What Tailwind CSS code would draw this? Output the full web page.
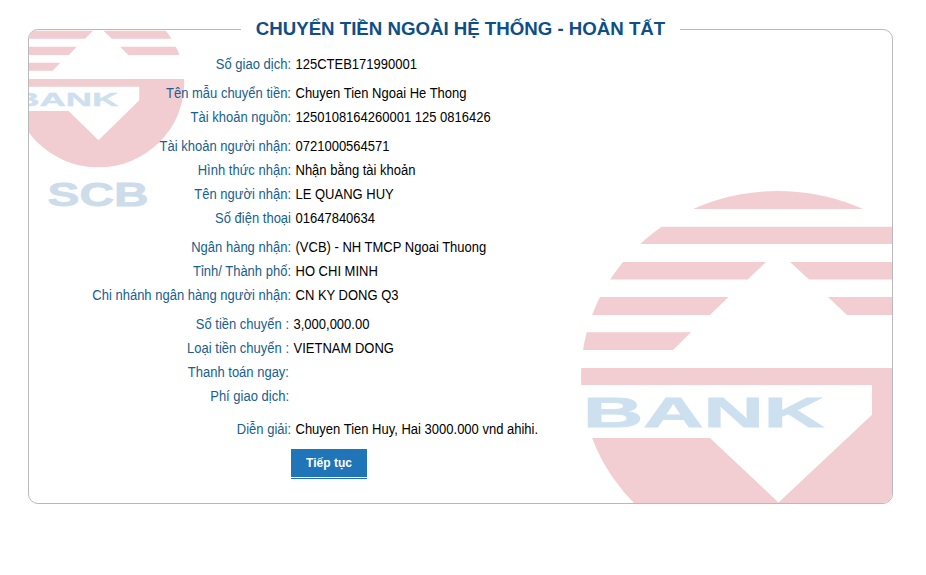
<!DOCTYPE html>
<html lang="vi">
<head>
<meta charset="utf-8">
<title>Chuyển tiền ngoài hệ thống</title>
<script src="https://cdn.jsdelivr.net/npm/@tailwindcss/browser@4"></script>
</head>
<body class="bg-white overflow-hidden font-['Liberation_Sans',Arial,sans-serif]">
<main class="pt-[29px] pl-[28px]">
  <section class="relative w-[865px] h-[475px] rounded-[10px] border border-[#b9b9bd]">
    <div class="absolute inset-0 rounded-[9px] overflow-hidden">
      <svg class="block" width="863" height="473" viewBox="29 30 863 473" font-family="Liberation Sans, Arial, sans-serif" font-weight="bold">
        <defs>
          <clipPath id="disc"><ellipse cx="778" cy="376.5" rx="197" ry="185.5"/></clipPath>
          <g id="mark">
            <g clip-path="url(#disc)">
              <path d="M570 190H990V209H570ZM570 226.7H990V244H570ZM570 262H766L747.5 279.6H570ZM790 262H990V279.6H809ZM570 297H728.5L710 315H570ZM828 297H990V315H847ZM570 332.3H691L673 350H570ZM570 368H990V570H570Z"/>
            </g>
            <path fill="#fff" d="M570 385H872V414.7L778.5 502.5L710 438H570Z"/>
            <text x="583" y="427" font-size="42" textLength="241" lengthAdjust="spacingAndGlyphs" fill="#cde0ef" stroke="#cde0ef" stroke-width=".8">BANK</text>
          </g>
        </defs>
        <use href="#mark" fill="#f2ced2"/>
        <use href="#mark" fill="#f1ccd0" transform="translate(-240.9 -88.4) scale(.436 .455)"/>
        <text x="47.5" y="206.3" font-size="33.5" textLength="101" lengthAdjust="spacingAndGlyphs" fill="#cddcea" stroke="#cddcea" stroke-width=".8">SCB</text>
      </svg>
    </div>
    <h1 class="absolute left-[212px] -top-[15px] w-[439px] h-[28px] bg-white text-center text-[18.67px] leading-[28px] font-bold text-[#0d4f86] whitespace-nowrap">CHUYỂN TIỀN NGOÀI HỆ THỐNG - HOÀN TẤT</h1>
    <div class="relative pt-[22px] flex flex-col gap-[5px] text-[13px] leading-[24px] text-black whitespace-nowrap [&_dt]:text-right [&_dt]:text-[#17608f] [&_dt]:scale-y-[1.1] [&_dd]:scale-y-[1.1] [&_dt]:translate-y-[0.5px] [&_dd]:translate-y-[0.5px]">
      <dl class="grid grid-cols-[262px_1fr] gap-x-[4.5px]">
        <dt>Số giao dịch:</dt><dd>125CTEB171990001</dd>
      </dl>
      <dl class="grid grid-cols-[262px_1fr] gap-x-[4.5px]">
        <dt>Tên mẫu chuyển tiền:</dt><dd>Chuyen Tien Ngoai He Thong</dd>
        <dt>Tài khoản nguồn:</dt><dd>1250108164260001 125 0816426</dd>
      </dl>
      <dl class="grid grid-cols-[262px_1fr] gap-x-[4.5px]">
        <dt>Tài khoản người nhận:</dt><dd>0721000564571</dd>
        <dt>Hình thức nhận:</dt><dd>Nhận bằng tài khoản</dd>
        <dt>Tên người nhận:</dt><dd>LE QUANG HUY</dd>
        <dt>Số điện thoại</dt><dd>01647840634</dd>
      </dl>
      <dl class="grid grid-cols-[262px_1fr] gap-x-[4.5px]">
        <dt>Ngân hàng nhận:</dt><dd>(VCB) - NH TMCP Ngoai Thuong</dd>
        <dt>Tỉnh/ Thành phố:</dt><dd>HO CHI MINH</dd>
        <dt>Chi nhánh ngân hàng người nhận:</dt><dd>CN KY DONG Q3</dd>
      </dl>
      <dl class="grid grid-cols-[260px_1fr] gap-x-[4.5px]">
        <dt>Số tiền chuyển :</dt><dd>3,000,000.00</dd>
        <dt>Loại tiền chuyển :</dt><dd>VIETNAM DONG</dd>
        <dt>Thanh toán ngay:</dt><dd></dd>
        <dt>Phí giao dịch:</dt><dd></dd>
      </dl>
      <dl class="mt-[4px] grid grid-cols-[262px_1fr] gap-x-[4.5px]">
        <dt>Diễn giải:</dt><dd>Chuyen Tien Huy, Hai 3000.000 vnd ahihi.</dd>
      </dl>
      <div class="mt-[3px] ml-[262px] w-[76px] border-b border-[#2075b8] pb-px">
        <button class="block w-full h-[28px] bg-[#2075b8] text-white text-[12px] font-bold leading-[27px]"><span class="inline-block scale-y-[1.1]">Tiếp tục</span></button>
      </div>
    </div>
  </section>
</main>
</body>
</html>
